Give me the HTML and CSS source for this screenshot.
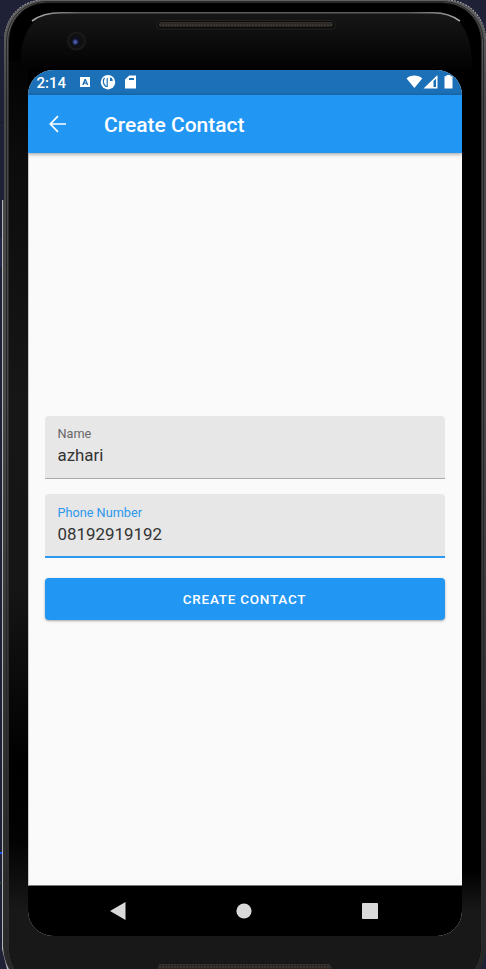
FILE: index.html
```html
<!DOCTYPE html>
<html lang="en">
<head>
<meta charset="utf-8">
<title>Create Contact</title>
<link rel="stylesheet" href="styles.css">
</head>
<body>
<div class="device">
  <svg class="casing" width="486" height="969" viewBox="0 0 486 969" aria-hidden="true">
    <defs>
      <linearGradient id="rim" x1="0" y1="0" x2="0" y2="1"><stop offset="0" stop-color="#626262"/><stop offset=".1" stop-color="#484848"/><stop offset=".4" stop-color="#484848"/><stop offset=".7" stop-color="#343434"/><stop offset="1" stop-color="#292929"/></linearGradient>
      <linearGradient id="top" x1="0" y1="0" x2="0" y2="1"><stop offset="0" stop-color="#171717"/><stop offset="1" stop-color="#020202"/></linearGradient>
      <linearGradient id="side" x1="0" y1="0" x2="0" y2="1"><stop offset="0" stop-color="#030303"/><stop offset=".12" stop-color="#0c0c0c"/><stop offset=".4" stop-color="#161616"/><stop offset=".62" stop-color="#151515"/><stop offset=".83" stop-color="#000"/><stop offset=".92" stop-color="#030303"/><stop offset="1" stop-color="#181818"/></linearGradient>
      <linearGradient id="low" x1="0" y1="0" x2="0" y2="1"><stop offset="0" stop-color="#000"/><stop offset="1" stop-color="#181818"/></linearGradient>
      <linearGradient id="shine"><stop offset="0" stop-color="#aaa"/><stop offset=".12" stop-color="#5c5c5c"/><stop offset=".88" stop-color="#5c5c5c"/><stop offset="1" stop-color="#aaa"/></linearGradient>
      <pattern id="mesh" width="3" height="3" patternUnits="userSpaceOnUse"><path fill="#292623" d="M0 0h3v3H0z"/><path fill="#393530" d="M0 0h2v2H0z"/></pattern>
      <radialGradient id="lens"><stop offset="0" stop-color="#5f74d0"/><stop offset="1" stop-color="#1b2045"/></radialGradient>
    </defs>
    <path fill="#252a4b" d="M0 238h4v29H0z"/>
    <path fill="#171a2b" d="M0 37h6v1H0zM0 122h5v1H0zM0 940h4v1H0z"/>
    <path fill="#1950ff" d="M0 852h2v2H0z"/>
    <path fill="#22502c" d="M0 882h1v2H0z"/>
    <path fill="#b4b4b4" d="M2 200h3v747l5 22H7l-5-20z"/>
    <path fill="none" stroke="#aaa" stroke-width="1.200" stroke-dasharray="2 1" d="M4.700 40C5 18 21 0 44 0M445 0c25 0 40 18 40.500 40"/>
    <path fill="url(#rim)" d="M4 42C4 18 21 0 46 0h397c25 0 43 18 43 42v903c0 8-2 17-6 24H9c-4-7-6-16-6-24V200h1z"/>
    <path fill="none" stroke="#272727" d="M6.500 945V43C6.500 19 23 1.500 47 1.500h395c24 0 41.500 18 41.500 42V945c0 8-2 16-6 24M6.500 945c0 8 2 16 5 24"/>
    <path fill="#2c2c2c" d="M8 43C8 20 24 2 47 2h394c24 0 41 17 41 40v900c0 10-2 19-7 27H15c-5-8-7-16-7-27z"/>
    <path fill="#000" d="M9 43C9 20 24 3 47 3h394c24 0 40 17 40 40v900c0 10-2 19-7 26H15c-4-7-6-16-6-26z"/>
    <path fill="url(#side)" d="M9 61h19v850H9z"/>
    <path fill="url(#low)" d="M461 870h20v41h-20z"/>
    <path fill="url(#top)" d="M20 69C20 32 33 12 61 12h372c28 0 39 20 39 57z"/>
    <path fill="none" stroke="url(#shine)" stroke-width="1.600" d="M32 21c8-6 17-8.200 29-8.200h372c11 0 20 3 27 8.400"/>
    <path fill="#181818" d="M9 910.500h472V943c0 10-2 19-7 26H15c-4-7-6-16-6-26z"/>
    <rect x="157" y="20.500" width="178" height="8.500" rx="3" fill="#0a0a0a" stroke="#242424"/>
    <rect x="159" y="22" width="174" height="5" rx="2" fill="url(#mesh)"/>
    <path fill="url(#mesh)" d="M159 964h171l2 5H157z"/>
    <circle cx="76.500" cy="41" r="8.500" fill="#101010" stroke="#1a1a1a" stroke-width="2"/>
    <circle cx="76" cy="41" r="4.800" fill="#0d1020"/>
    <circle cx="75.300" cy="42" r="2.900" fill="url(#lens)"/>
  </svg>

  <main class="screen">
    <header class="status">
      <span class="clock">2:14</span>
      <svg class="notices" width="60" height="16" viewBox="0 0 60 16" fill="#fff">
        <path fill-rule="evenodd" d="M1 3h10v10H1zM3.200 11h1.500l.5-1.300h2.100l.5 1.300h1.500L6.900 5H5.500zM5.700 8.500l.6-1.700.6 1.700z"/>
        <circle cx="29" cy="8.200" r="7.200"/>
        <path fill="none" stroke="#1b70b7" stroke-width="1.200" d="M25.500 3.800c-1.800 2.500-1.600 6.800 1.500 8.700h1.200V4"/>
        <path fill="#1b70b7" d="M31 3.300c1.900.5 2.900 1.800 2.700 3.800H31z"/>
        <path fill-rule="evenodd" d="M50.200 1.500H57v13H46V5.500zM50 4v2h5V4z"/>
      </svg>
      <svg class="signals" width="48" height="16" viewBox="0 0 48 16" fill="#fff">
        <path d="M.6 4.400C4.400.6 12.200.6 16.200 4.400L8.400 14z"/>
        <path fill-rule="evenodd" d="M17.500 14.500 31.500 1v13.500zM27.500 7v6.100H30V4.700z"/>
        <path d="M40.500 2.200V1h4v1.200h2v12.300h-8V2.200z"/>
      </svg>
    </header>

    <div class="appbar">
      <svg class="back" width="18" height="18" viewBox="0 0 18 18" fill="none" stroke="#fff" stroke-width="1.700"><path d="M17 9H2M9 1.200 1.300 9 9 16.800"/></svg>
      <h1 class="title">Create Contact</h1>
    </div>

    <form class="form">
      <div class="field">
        <span class="label">Name</span>
        <span class="value">azhari</span>
      </div>
      <div class="field focused">
        <span class="label">Phone Number</span>
        <span class="value">08192919192</span>
      </div>
      <button class="submit" type="button"><span class="caption">CREATE CONTACT</span></button>
    </form>

    <nav class="nav">
      <svg width="16" height="18" viewBox="0 0 16 18" fill="#d9d9d9"><path d="M15.500 0v18L0 9z"/></svg>
      <svg width="16" height="16" viewBox="0 0 16 16" fill="#d9d9d9"><circle cx="8" cy="8" r="7.600"/></svg>
      <svg width="16" height="16" viewBox="0 0 16 16" fill="#d9d9d9"><rect width="16" height="16" rx=".8"/></svg>
    </nav>
  </main>
</div>
</body>
</html>
```

FILE: styles.css
```css
* { box-sizing: border-box; }

body {
  margin: 0;
  background: #1f2236;
  font-family: Roboto, "Liberation Sans", sans-serif;
}

.device {
  position: relative;
  width: 486px;
  height: 969px;
  padding: 69.5px 24.5px 33px 28px;
  overflow: hidden;
}

.casing {
  position: absolute;
  inset: 0;
}

.screen {
  position: relative;
  display: flex;
  flex-direction: column;
  height: 100%;
  overflow: hidden;
  border-radius: 25px;
  background: #fafafa;
}

.status {
  display: flex;
  align-items: center;
  height: 25.5px;
  padding: 0 7.5px 0 8.5px;
  background: #1b70b7;
}

.clock {
  width: 42px;
  padding-top: 1px;
  color: #fff;
  font-size: 15px;
  font-weight: 500;
  line-height: 24px;
}

.signals { margin-left: auto; }

.appbar {
  position: relative;
  display: flex;
  align-items: center;
  height: 58px;
  padding-left: 20.5px;
  background: #2196f3;
  box-shadow: 0 1px 4px rgba(0, 0, 0, .4);
}

.title {
  margin: 2px 0 0 37.5px;
  color: #fff;
  font-size: 21px;
  font-weight: 500;
  line-height: 28px;
}

.form {
  display: flex;
  flex: 1;
  flex-direction: column;
  justify-content: center;
  padding: 0 17px 2px 15.5px;
  border-left: 1px solid #c8c8c8;
  border-bottom: 1px solid #777;
}

.field {
  display: flex;
  flex-direction: column;
  height: 63px;
  margin-bottom: 15px;
  padding: 10.5px 13px 0;
  border-bottom: 1.5px solid #aaa;
  border-radius: 4px 4px 0 0;
  background: #e7e7e7;
}

.field.focused {
  height: 64px;
  margin-bottom: 20px;
  padding-top: 11px;
  border-bottom: 2.5px solid #2d98ee;
}

.label {
  color: #686868;
  font-size: 12.7px;
  line-height: 16px;
}

.focused .label { color: #2d98ee; }

.value {
  margin-top: 2px;
  color: #333;
  font-size: 16.9px;
  line-height: 22px;
}

.submit {
  height: 42px;
  padding: 0;
  border: 0;
  border-radius: 4px;
  background: #2196f3;
  box-shadow: 0 1px 2.5px rgba(0, 0, 0, .35);
  color: #fff;
  font-family: inherit;
  font-size: 13.5px;
  font-weight: 500;
  letter-spacing: .75px;
}

.nav {
  display: flex;
  align-items: center;
  justify-content: space-between;
  height: 50.5px;
  padding: 0 83.5px 0 82px;
  background: #000;
}
```
